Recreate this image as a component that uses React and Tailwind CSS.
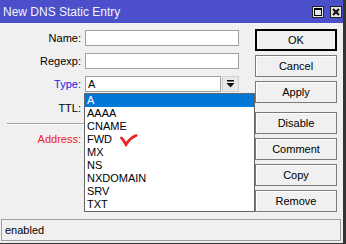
import React from 'react';

const font = { fontFamily: '"Liberation Sans", Arial, sans-serif' };

const fields = [
  { label: 'Name:', color: 'text-black', top: 'mt-0' },
  { label: 'Regexp:', color: 'text-black', top: 'mt-[7px]' },
];

const types = ['A', 'AAAA', 'CNAME', 'FWD', 'MX', 'NS', 'NXDOMAIN', 'SRV', 'TXT'];

function Btn({ children, primary, className = '' }) {
  return (
    <div
      className={`h-[22px] w-[82px] flex items-center justify-center text-[11px] text-black bg-[#f0f0f0] ${
        primary ? 'border-2 border-black' : 'border border-[#7a7a7a] shadow-[inset_1px_1px_0_#ffffff]'
      } ${className}`}
    >
      {children}
    </div>
  );
}

function Row({ label, color, className = '', children }) {
  return (
    <div className={`flex items-center h-[16px] ${className}`}>
      <div className={`w-[81px] text-right text-[11px] ${color}`}>{label}</div>
      <div className="ml-[4px] w-[154px] h-[16px]">{children}</div>
    </div>
  );
}

function Input({ value }) {
  return (
    <div className="w-full h-full bg-white border border-[#a0a0a0] text-[11px] leading-[14px] px-[2px]">{value}</div>
  );
}

export default function App() {
  return (
    <div style={font} className="w-[346px] h-[244px] flex flex-col bg-[#f0f0f0] border-r-[3px] border-b-[1px] border-[#333333] relative overflow-hidden">
      <div className="h-[23px] bg-[#4b4fc9] flex items-center pl-[3px] pr-[1px] shrink-0">
        <span className="text-[12px] text-[#f4f4ff]">New DNS Static Entry</span>
        <div className="ml-auto flex gap-[6px] items-center">
          <div className="w-[12px] h-[12px] bg-[#e8e8e8] border border-[#222] flex items-center justify-center">
            <div className="w-[8px] h-[8px] border border-black border-t-2"></div>
          </div>
          <div className="w-[12px] h-[12px] bg-[#e8e8e8] border border-[#222] flex items-center justify-center">
            <svg width="8" height="8" viewBox="0 0 8 8">
              <path d="M1 1 L7 7 M7 1 L1 7" stroke="#111" strokeWidth="2.2" />
            </svg>
          </div>
        </div>
      </div>

      <div className="flex flex-1">
        <div className="w-[255px] pt-[7px] flex flex-col">
          {fields.map((f) => (
            <Row key={f.label} label={f.label} color={f.color} className={f.top}>
              <Input value="" />
            </Row>
          ))}
          <Row label="Type:" color="text-[#1d1de0]" className="mt-[7px]">
            <div className="flex h-full">
              <div className="flex-1">
                <Input value="A" />
              </div>
              <div className="w-[17px] ml-[1px] h-full bg-[#e9e9e9] border border-[#cfcfcf] flex items-center justify-center">
                <svg width="9" height="9" viewBox="0 0 9 9">
                  <rect x="1" y="0" width="7" height="1.5" fill="#111" />
                  <path d="M0.5 3 L8.5 3 L4.5 7.5 Z" fill="#111" />
                </svg>
              </div>
            </div>
          </Row>
          <Row label="TTL:" color="text-black" className="mt-[8px]">
            <Input value="" />
          </Row>
          <div className="ml-[7px] mr-[16px] mt-[7px] h-px bg-[#a0a0a0]"></div>
          <div className="ml-[7px] mr-[16px] h-px bg-white"></div>
          <Row label="Address:" color="text-[#f0202a]" className="mt-[6px]">
            <Input value="" />
          </Row>
        </div>

        <div className="w-[82px] pt-[6px] flex flex-col">
          <Btn primary>OK</Btn>
          <Btn className="mt-[4px]">Cancel</Btn>
          <Btn className="mt-[4px]">Apply</Btn>
          <Btn className="mt-[9px]">Disable</Btn>
          <Btn className="mt-[4px]">Comment</Btn>
          <Btn className="mt-[4px]">Copy</Btn>
          <Btn className="mt-[4px]">Remove</Btn>
        </div>
      </div>

      <div className="mx-[1px] mb-[2px] mr-[2px] h-[22px] border border-[#a0a0a0] flex items-center px-[3px] text-[11px] text-black shrink-0">
        enabled
      </div>

      <div className="absolute left-[84px] top-[93px] w-[171px] h-[119px] bg-white border border-[#646464] flex flex-col">
        {types.map((t, i) => (
          <div
            key={t}
            className={`h-[13px] leading-[13px] text-[11px] pl-[2px] ${i === 0 ? 'bg-[#0078d7] text-white' : 'text-black'}`}
          >
            {t}
          </div>
        ))}
        <svg className="absolute left-[34px] top-[40px]" width="20" height="14" viewBox="0 0 20 14">
          <path d="M2.5 4 Q4.5 6 7 10.5 Q11 4 17 1.5" stroke="#e8262a" strokeWidth="2.8" fill="none" strokeLinecap="round" />
        </svg>
      </div>
    </div>
  );
}
